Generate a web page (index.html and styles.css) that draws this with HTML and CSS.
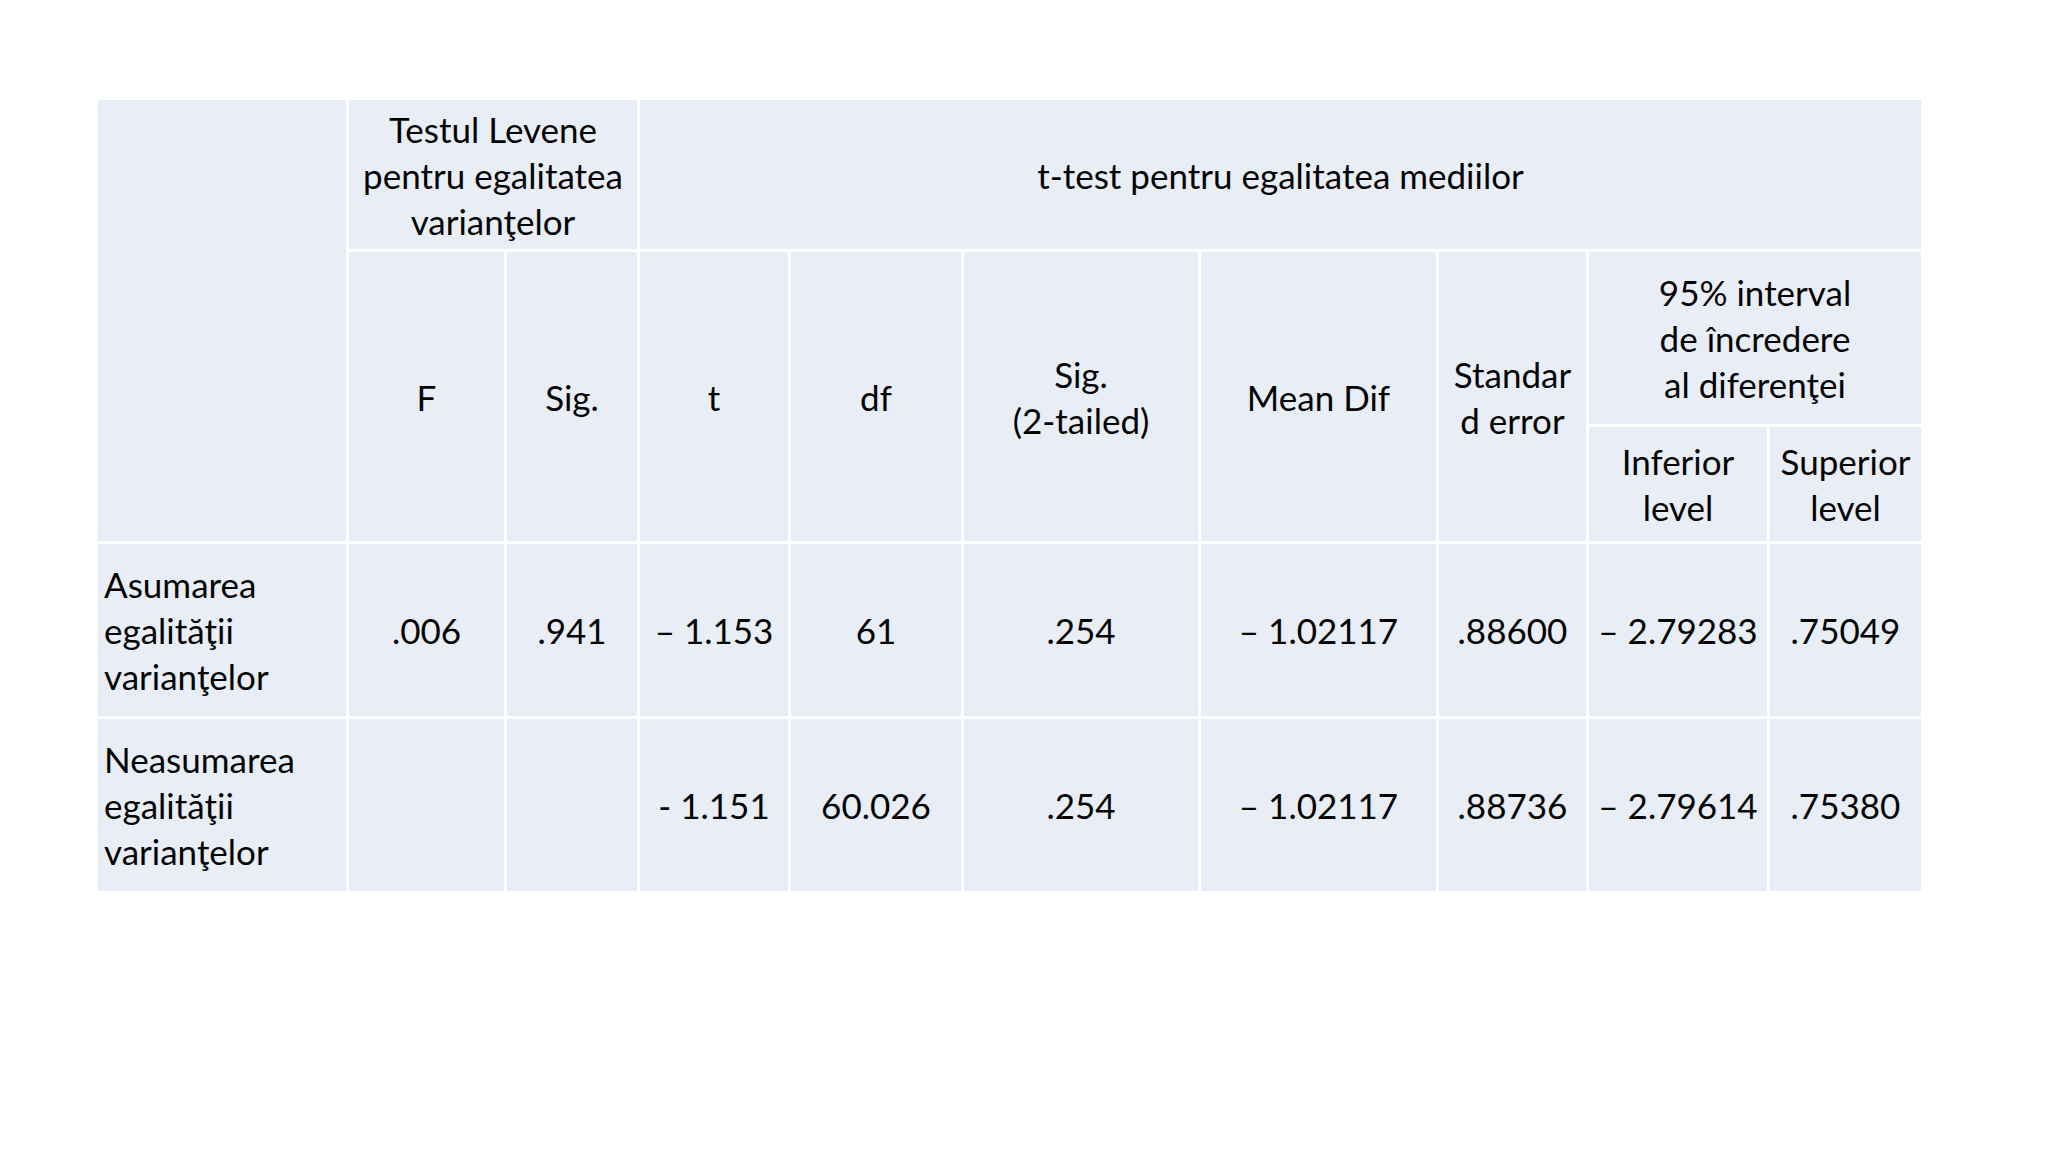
FILE: index.html
```html
<!DOCTYPE html>
<html lang="ro">
<head>
<meta charset="utf-8">
<title>t-test</title>
<link rel="stylesheet" href="styles.css">
</head>
<body>
<table class="stats">
  <colgroup>
    <col class="c-label">
    <col class="c-f">
    <col class="c-sig">
    <col class="c-t">
    <col class="c-df">
    <col class="c-sig2">
    <col class="c-mean">
    <col class="c-se">
    <col class="c-inf">
    <col class="c-sup">
  </colgroup>
  <tr class="r-h1">
    <td rowspan="3"></td>
    <td colspan="2">Testul Levene<br>pentru egalitatea<br>varianţelor</td>
    <td colspan="7">t-test pentru egalitatea mediilor</td>
  </tr>
  <tr class="r-h2">
    <td rowspan="2">F</td>
    <td rowspan="2">Sig.</td>
    <td rowspan="2">t</td>
    <td rowspan="2">df</td>
    <td rowspan="2">Sig.<br>(2-tailed)</td>
    <td rowspan="2">Mean Dif</td>
    <td rowspan="2">Standar<br>d error</td>
    <td colspan="2">95% interval<br>de încredere<br>al diferenţei</td>
  </tr>
  <tr class="r-h3">
    <td>Inferior<br>level</td>
    <td>Superior<br>level</td>
  </tr>
  <tr class="r-data">
    <td class="label">Asumarea<br>egalităţii<br>varianţelor</td>
    <td>.006</td>
    <td>.941</td>
    <td>– 1.153</td>
    <td>61</td>
    <td>.254</td>
    <td>– 1.02117</td>
    <td>.88600</td>
    <td>– 2.79283</td>
    <td>.75049</td>
  </tr>
  <tr class="r-data">
    <td class="label">Neasumarea<br>egalităţii<br>varianţelor</td>
    <td></td>
    <td></td>
    <td>- 1.151</td>
    <td>60.026</td>
    <td>.254</td>
    <td>– 1.02117</td>
    <td>.88736</td>
    <td>– 2.79614</td>
    <td>.75380</td>
  </tr>
</table>
</body>
</html>
```

FILE: styles.css
```css
html, body {
  margin: 0;
  padding: 0;
  background: #ffffff;
}

body {
  padding: 97px 0 0 95px;
  font-family: Lato, "Noto Sans", "Liberation Sans", sans-serif;
  color: #050505;
}

.stats {
  border-collapse: collapse;
  table-layout: fixed;
  width: 1826px;
}

.stats td {
  background: #e9edf5;
  border: 3px solid #ffffff;
  text-align: center;
  vertical-align: middle;
  font-size: 35px;
  line-height: 46px;
  padding: 0;
  white-space: nowrap;
}

.stats td.label {
  text-align: left;
  padding-left: 6px;
}

.c-label { width: 251px; }
.c-f { width: 158px; }
.c-sig { width: 133px; }
.c-t { width: 151px; }
.c-df { width: 173px; }
.c-sig2 { width: 237px; }
.c-mean { width: 238px; }
.c-se { width: 150px; }
.c-inf { width: 181px; }
.c-sup { width: 154px; }

.r-h1 { height: 152px; }
.r-h2 { height: 175px; }
.r-h3 { height: 117px; }
.r-data { height: 175px; }
```
